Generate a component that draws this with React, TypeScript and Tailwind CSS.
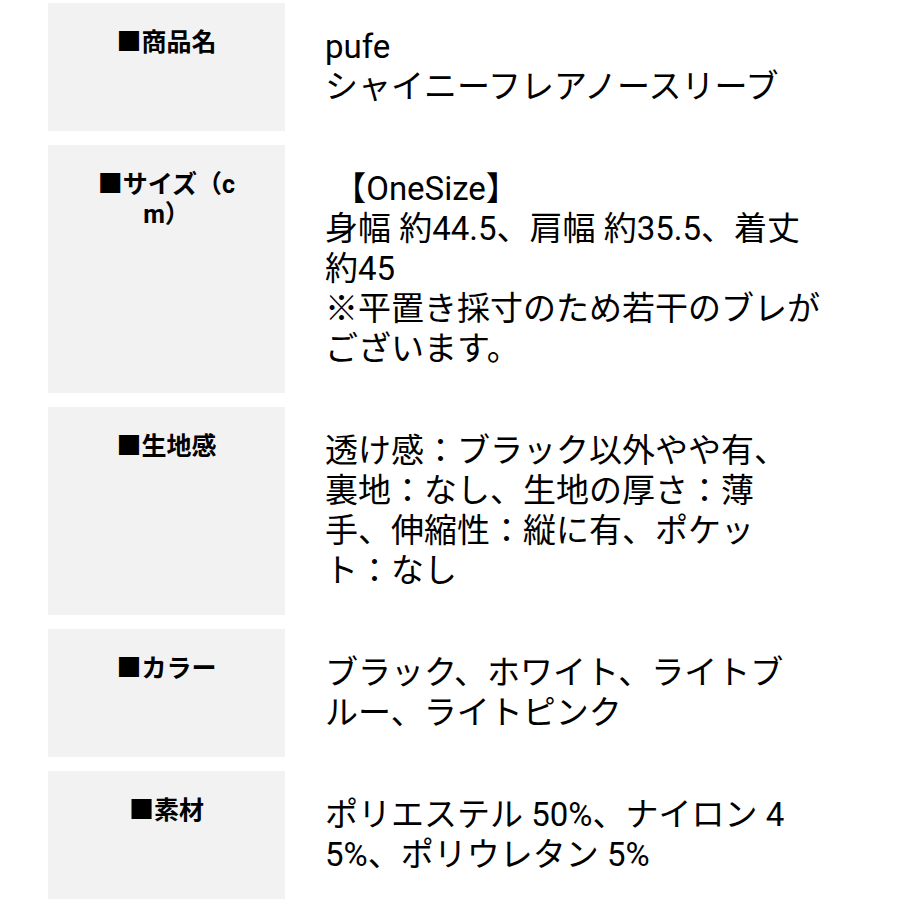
import React from "react";

type Row = {
  label: string[];
  lines: string[];
};

const rows: Row[] = [
  {
    label: ["■商品名"],
    lines: ["pufe", "シャイニーフレアノースリーブ"],
  },
  {
    label: ["■サイズ（c", "m）"],
    lines: [
      " 【OneSize】",
      "身幅 約44.5、肩幅 約35.5、着丈",
      "約45",
      "※平置き採寸のため若干のブレが",
      "ございます。",
    ],
  },
  {
    label: ["■生地感"],
    lines: [
      "透け感：ブラック以外やや有、",
      "裏地：なし、生地の厚さ：薄",
      "手、伸縮性：縦に有、ポケッ",
      "ト：なし",
    ],
  },
  {
    label: ["■カラー"],
    lines: ["ブラック、ホワイト、ライトブ", "ルー、ライトピンク"],
  },
  {
    label: ["■素材"],
    lines: ["ポリエステル 50%、ナイロン 4", "5%、ポリウレタン 5%"],
  },
];

const App: React.FC = () => {
  return (
    <div className="min-h-screen bg-white text-black font-['Roboto','Noto_Sans_CJK_JP',sans-serif] pt-[3px] flex flex-col gap-[14px]">
      {rows.map((row, i) => (
        <div key={i} className="flex">
          {/* Label cell */}
          <div className="ml-[48px] w-[237px] shrink-0 bg-[#f2f2f2] pt-[25px] pb-6 text-center font-bold text-[25px] leading-[30px]">
            {row.label.map((l, j) => (
              <div key={j} className="whitespace-nowrap">{l}</div>
            ))}
          </div>

          {/* Value cell */}
          <div className="pl-10 pt-6 pb-6 text-[33px] leading-[40px]">
            {row.lines.map((l, j) => (
              <div key={j} className="whitespace-pre">{l}</div>
            ))}
          </div>
        </div>
      ))}
    </div>
  );
};

export default App;
